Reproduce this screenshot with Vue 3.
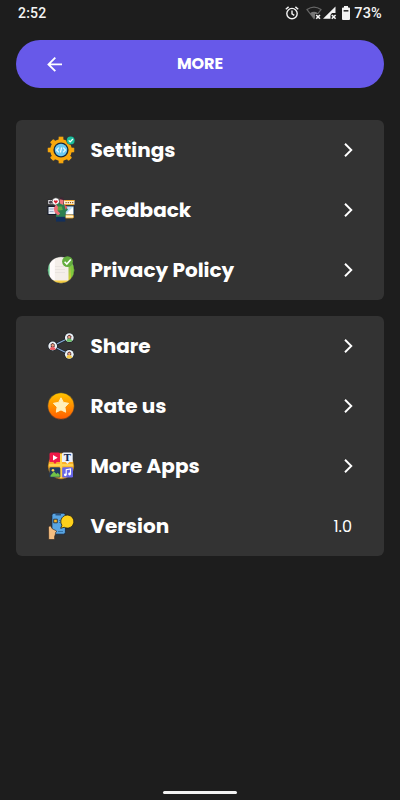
<template>
    <div class="screen">
        <!-- Status bar -->
        <div class="status-bar">
            <span class="status-time">2:52</span>
            <div class="status-icons">
                <svg class="alarm-icon" width="14" height="14" viewBox="0 0 14 14" fill="none" stroke="#f4f4f4" stroke-width="1.4">
                    <circle cx="7" cy="7.6" r="5.2" />
                    <path d="M7 4.6v3.3l2.3 1.5M.8 3.2 3.6.9M13.2 3.2 10.4.9" />
                </svg>
                <svg class="signal-icon" width="31" height="14" viewBox="0 0 31 14">
                    <path d="M1 3.6Q8 -1.2 15 3.6L8 12.5z" fill="none" stroke="#666" stroke-width="1.2" />
                    <path d="M4 7.2Q8 4.4 12 7.2L8 12.4z" fill="#777" />
                    <path d="M9 8h7v6h-7z" fill="#1d1d1d" />
                    <path d="m10.2 9 3.8 3.800m0-3.800-3.800 3.800" stroke="#f4f4f4" stroke-width="1.6" />
                    <path d="M29.500.6V7H26l-1.500 2v3.800H17z" fill="#f4f4f4" />
                    <path d="m25.800 9 3.800 3.800m0-3.800-3.800 3.800" stroke="#f4f4f4" stroke-width="1.6" />
                </svg>
                <svg class="battery-icon" width="10" height="14" viewBox="0 0 10 14">
                    <path d="M3 0h4v1.4h1q1 0 1 1V13q0 1-1 1H2q-1 0-1-1V2.4q0-1 1-1h1z" fill="#f4f4f4" />
                    <path d="M2.6 4h4.800v1.6H2.6z" fill="#333" />
                </svg>
                <span class="status-percent">73%</span>
            </div>
        </div>

        <header class="top-bar">
            <svg class="back-icon" width="16" height="16" viewBox="0 0 16 16" fill="none" stroke="#fff" stroke-width="1.9">
                <path d="M15 8.400H1.700M8.300 1.600 1.500 8.400l6.800 6.800" />
            </svg>
            <h1 class="title">MORE</h1>
        </header>

        <main class="menu">
            <section v-for="(group, index) in groups" :key="index" class="card">
                <div v-for="item in group" :key="item.id" class="row">
                    <svg v-if="item.id === 'settings'" class="row-icon" viewBox="0 0 28 28">
                        <g fill="#f9a80d" stroke="#26313d" stroke-width=".4">
                            <rect v-for="n in 8" :key="n" x="11.4" y=".6" width="5.2" height="6" rx="1" :transform="`rotate(${n * 45} 14 14)`" />
                        </g>
                        <circle cx="14" cy="14" r="10.8" fill="#f9a80d" />
                        <circle cx="14" cy="14" r="7.6" fill="#172b40" />
                        <circle cx="14" cy="14" r="6.200" fill="#6ccaf2" />
                        <path d="m11.8 11.7-2.2 2.300 2.200 2.300m4.400-4.600 2.200 2.300-2.200 2.300M14.600 11.500l-1.200 5" fill="none" stroke="#e9faff" stroke-width="1.200" />
                        <circle cx="23.7" cy="4.4" r="4.4" fill="#263b3c" />
                        <circle cx="23.7" cy="4.4" r="3.9" fill="#1dbd9b" />
                        <path d="m21.700 4.400 1.500 1.500 2.700-2.900" fill="none" stroke="#fff" stroke-width="1.3" />
                    </svg>

                    <svg v-else-if="item.id === 'feedback'" class="row-icon" viewBox="0 0 28 28">
                        <rect x="1" y="10.500" width="8" height="8" fill="#e3e9f3" stroke="#151a2b" stroke-width="1" />
                        <path d="M2.500 13h4M2.500 15.500h4" stroke="#7d91b4" stroke-width=".7" />
                        <rect x="18" y="10" width="9" height="9" fill="#b9dff8" stroke="#182238" stroke-width=".8" />
                        <path d="m19 18 7-7v7z" fill="#fff" />
                        <rect x="17" y="4" width="10.500" height="5" rx=".8" fill="#fff4dc" />
                        <path d="M17.500 4.600h10M18 8.600h9" stroke="#f6a51b" />
                        <path d="M18.500 6.700h8" stroke="#8a551b" stroke-width="1.200" stroke-dasharray="1.200 1" />
                        <rect x="18" y="19" width="8.500" height="3" rx="1" fill="#fff0c7" stroke="#f1a422" stroke-width=".8" />
                        <path d="M.8 3.500h6v5.200h-6z" fill="#e8e7ea" stroke="#181818" stroke-width=".8" />
                        <circle cx="3.600" cy="6.200" r="1.600" fill="#4d4651" />
                        <circle cx="8.800" cy="5.500" r="3.700" fill="#fff" stroke="#222" stroke-width=".6" />
                        <path d="M8.800 7.800 6.700 5.500q.6-2 2.100-.8 1.500-1.200 2.100.8z" fill="#d92332" />
                        <path d="M9.300 8.300q4-2 8.300.2l3.400 5.300-2.500 2.200v5.500H9l.2-6.500z" fill="#2c7f50" />
                        <path d="M9.800 10.500h5l1 3.500-6 .8z" fill="#63a944" />
                        <path d="m9.300 8.300-2.600 3.900.8 3.800 3.500 3.400 2.200-1.800-2.800-3 .7-3.300z" fill="#ef6f79" />
                        <path d="M12.700 2.500q4-1.500 4 2.500l-.5 4-3.300-1.500z" fill="#f0757b" />
                        <path d="M12.400 3.200q1-2.800 4-1.400l.8 2.500-3.200-.8z" fill="#3c2634" />
                        <path d="m17.200 8.300 3.200 2.900-1.800 2.500z" fill="#e95966" />
                        <path d="M9 20.800h9.300v4.800H9z" fill="#132f5b" />
                    </svg>

                    <svg v-else-if="item.id === 'privacy'" class="row-icon" viewBox="0 0 28 28">
                        <defs>
                            <clipPath id="privacy-clip"><circle cx="14" cy="14" r="13.2" /></clipPath>
                            <linearGradient id="privacy-side" x1="0" y1="0" x2="0" y2="1">
                                <stop offset="0" stop-color="#43bd69" />
                                <stop offset="1" stop-color="#f1cf27" />
                            </linearGradient>
                        </defs>
                        <g clip-path="url(#privacy-clip)">
                            <path d="M0 0h28v28H0z" fill="#f4eee9" />
                            <path d="M0 0h2.800v28H0z" fill="#6ed597" />
                            <path d="M21.500 0H28v28h-6.500z" fill="url(#privacy-side)" />
                            <path d="M24 10h4v12h-4z" fill="#80c83e" />
                            <path d="M3 24.500h20V28H3z" fill="#f6ce45" />
                            <path d="M2.800 2v22h5V1z" fill="#fffafa" />
                            <path d="M8 10.500h9M8 13.500h10M8 16.500h10" stroke="#e4dedb" stroke-width=".7" />
                        </g>
                        <circle cx="14" cy="14" r="13.4" fill="none" stroke="#222b29" stroke-width=".5" />
                        <circle cx="20.5" cy="5.6" r="5.4" fill="#63ae3e" />
                        <path d="m17.600 5.800 2.200 2.200 4-4.600" fill="none" stroke="#fff" stroke-width="1.6" />
                    </svg>

                    <svg v-else-if="item.id === 'share'" class="row-icon" viewBox="0 0 28 28">
                        <path d="m22.300 5.700-16.600 8.300 16.600 8.300" fill="none" stroke="#172233" stroke-width="2.3" />
                        <path d="m22.300 5.700-16.600 8.300 16.600 8.300" fill="none" stroke="#8bacd4" stroke-width="1.2" />
                        <g v-for="person in people" :key="person.color" :transform="`translate(${person.x} ${person.y})`">
                            <circle r="4.9" fill="#151b24" />
                            <circle r="4.4" fill="#eaf1f5" />
                            <path d="M-1.900 1v-2.400q1.900-3 3.800 0V1z" fill="#482329" />
                            <circle cy="-.6" r="1.3" fill="#eba180" />
                            <path d="M-3 3.200Q-2.500.7 0 .8T3 3.200Q0 5-3 3.200z" :fill="person.color" />
                        </g>
                    </svg>

                    <svg v-else-if="item.id === 'rate'" class="row-icon" viewBox="0 0 28 28">
                        <defs>
                            <linearGradient id="rate-fill" x1="0" y1="0" x2="0" y2="1">
                                <stop offset="0" stop-color="#ffc500" />
                                <stop offset="1" stop-color="#ff5b00" />
                            </linearGradient>
                        </defs>
                        <circle cx="14" cy="14" r="13.3" fill="url(#rate-fill)" stroke="#24303a" stroke-width=".5" />
                        <path d="m14 5.800 2.400 4.600 5.200.9-3.700 3.800.8 5.100-4.700-2.300-4.700 2.300.8-5.100-3.700-3.800 5.200-.9z" fill="#fff0bc" stroke="#fff0bc" stroke-width="1" stroke-linejoin="round" />
                    </svg>

                    <svg v-else-if="item.id === 'apps'" class="row-icon" viewBox="0 0 28 28">
                        <circle cx="14" cy="14" r="13.2" fill="#f9ae2b" stroke="#242424" stroke-width=".5" />
                        <path d="M14 2v24M2 13.200h24" stroke="#ffd34c" stroke-width="2.2" />
                        <path d="M4 .5h7.500q1.500 0 1.500 1.500v8H9.700L8 12l-1.700-2H2.500V2Q2.500.5 4 .5z" fill="#ee1947" />
                        <path d="m6 3 4.700 2.700L6 8.400z" fill="#fff" />
                        <path d="M16.500.5h7.700q1.500 0 1.500 1.500v8h-3.400l-1.900 2-1.800-2H15V2Q15 .5 16.500.5z" fill="#e9effc" />
                        <text class="tile-letter" x="20.4" y="8.9" text-anchor="middle">T</text>
                        <rect x="2.5" y="15.2" width="10.8" height="10.3" rx="1.3" fill="#213b61" />
                        <path d="m3.500 23.500 3.500-4 2.400 2.500 1.300-1.300 2 2v2h-9.200z" fill="#72c246" />
                        <circle cx="6" cy="18.2" r="1.3" fill="#ffd548" />
                        <rect x="15.2" y="15.2" width="10.8" height="10.3" rx="1.3" fill="#6767e8" />
                        <path d="M19.200 22.800v-5l4.300-.8v5" fill="none" stroke="#fff" stroke-width="1.1" />
                        <circle cx="18.3" cy="22.8" r="1.4" fill="#fff" />
                        <circle cx="22.6" cy="22" r="1.4" fill="#fff" />
                    </svg>

                    <svg v-else class="row-icon" viewBox="0 0 28 28">
                        <rect x="4.9" y="1.2" width="13.5" height="21" rx="2" fill="#58a5e3" stroke="#142034" stroke-width=".8" />
                        <path d="M8.500 2.800h5.500" stroke="#203a5c" stroke-width="1.1" />
                        <path d="M6.700 7.200h3.600v3.600H6.700z" fill="#f7b92a" stroke="#182033" stroke-width=".8" />
                        <path d="M12 8.500h1.500M12 10.500h1.500M11 19.500h5" stroke="#316da2" stroke-width=".9" />
                        <path d="M1.500 15.500q.2-1.800 2-1.700l1.800 3 4 2q1 1.400-.8 1.700l-.2 2.300-.7 1.500v3.200H1.700z" fill="#f4bd80" stroke="#2c211c" stroke-width=".6" />
                        <path d="m14.900 13.200-1.200 3.100 3.500-1A6.500 6.500 0 1 0 14.900 13.200z" fill="#fed11b" stroke="#211e17" stroke-width=".8" />
                    </svg>

                    <span class="row-label">{{ item.label }}</span>
                    <span v-if="item.value" class="row-value">{{ item.value }}</span>
                    <svg v-else class="chevron" width="9" height="14" viewBox="0 0 9 14" fill="none" stroke="#fff" stroke-width="1.9">
                        <path d="m1 .8 6.300 6.200L1 13.200" />
                    </svg>
                </div>
            </section>
        </main>

        <div class="home-indicator"></div>
    </div>
</template>


<script setup>
// Menu entries, one array per card
const groups = [
    [
        { id: "settings", label: "Settings" },
        { id: "feedback", label: "Feedback" },
        { id: "privacy", label: "Privacy Policy" },
    ],
    [
        { id: "share", label: "Share" },
        { id: "rate", label: "Rate us" },
        { id: "apps", label: "More Apps" },
        { id: "version", label: "Version", value: "1.0" },
    ],
];

// Avatars of the share icon
const people = [
    { x: 5.7, y: 14, color: "#ed5c65" },
    { x: 22.3, y: 5.7, color: "#68bd68" },
    { x: 22.3, y: 22.3, color: "#f3c743" },
];
</script>


<style>
body {
    margin: 0;
    background: #1d1d1d;
}
</style>

<style scoped>
.screen {
    display: flex;
    flex-direction: column;
    box-sizing: border-box;
    height: 100vh;
    padding: 0 16px 6px;
    background: #1d1d1d;
    color: #fff;
    font-family: Poppins, Inter, "Open Sans", sans-serif;
}

.status-bar {
    display: flex;
    align-items: center;
    justify-content: space-between;
    height: 26px;
    padding: 0 2px;
    color: #f4f4f4;
    font-family: Roboto, sans-serif;
    font-size: 14px;
    font-weight: 500;
    letter-spacing: 0.2px;
}

.status-icons {
    display: flex;
    align-items: center;
}

.signal-icon {
    margin-left: 7px;
}

.battery-icon {
    margin: 0 3px 0 4px;
}

.status-percent {
    font-size: 14.5px;
}

.top-bar {
    display: grid;
    grid-template-columns: 16px 1fr 16px;
    align-items: center;
    height: 48px;
    margin-top: 14px;
    padding: 0 31px;
    border-radius: 24px;
    background: #6759e9;
}

.title {
    margin: 0;
    font-size: 16px;
    font-weight: 700;
    line-height: 24px;
    text-align: center;
    letter-spacing: -0.1px;
}

.menu {
    display: flex;
    flex: 1;
    flex-direction: column;
    gap: 16px;
    margin-top: 32px;
}

.card {
    border-radius: 6px;
    background: #333;
}

.row {
    display: flex;
    align-items: center;
    height: 60px;
    padding: 0 31px;
}

.row-icon {
    width: 28px;
    height: 28px;
}

.row-label {
    flex: 1;
    margin-left: 15.4px;
    font-size: 20px;
    font-weight: 700;
    white-space: nowrap;
}

.row-value {
    margin-right: 1px;
    font-size: 16px;
}

.tile-letter {
    fill: #172b50;
    font-family: "DejaVu Serif", serif;
    font-size: 9.5px;
    font-weight: 700;
}

.home-indicator {
    align-self: center;
    width: 74px;
    height: 3px;
    border-radius: 2px;
    background: #f2f2f2;
}
</style>
